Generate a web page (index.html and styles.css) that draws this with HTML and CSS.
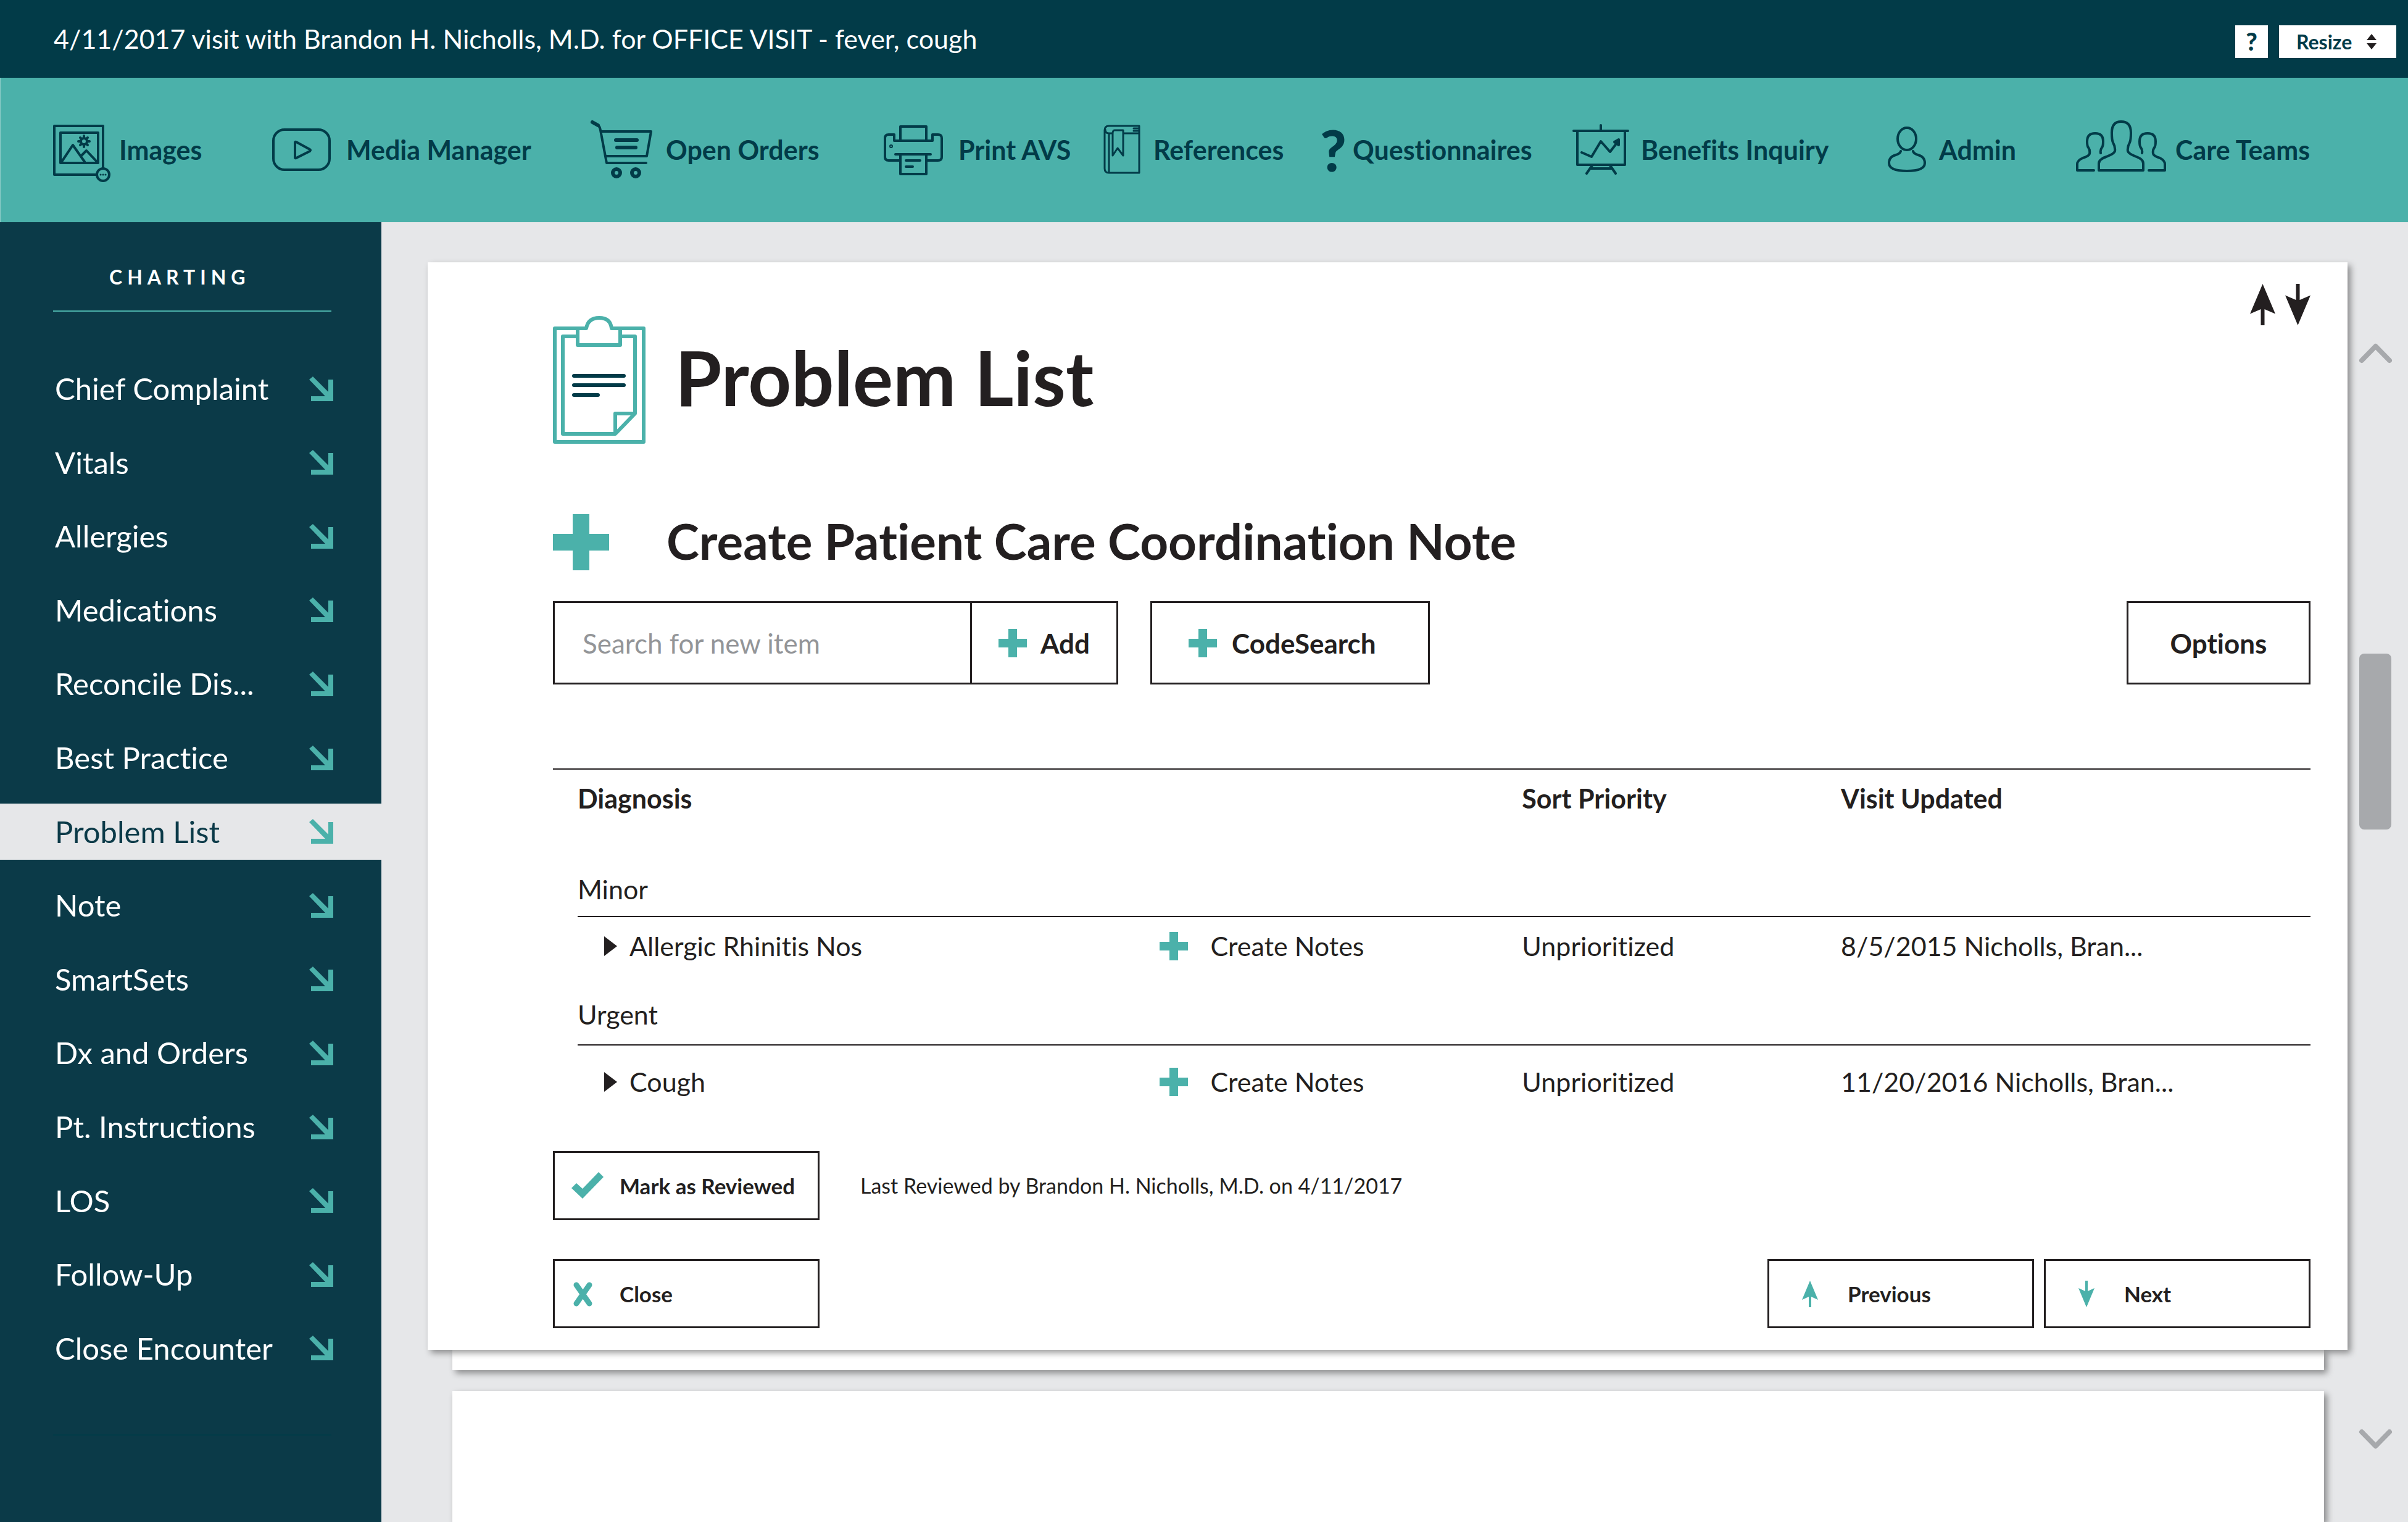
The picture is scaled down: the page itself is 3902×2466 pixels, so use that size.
FILE: index.html
```html
<!DOCTYPE html>
<html lang="en">
<head>
<meta charset="utf-8">
<meta name="viewport" content="width=device-width, initial-scale=1">
<title>Problem List</title>
<link rel="stylesheet" href="styles.css">
</head>
<body class="page">

<svg class="sprite" aria-hidden="true">
  <symbol id="go" viewBox="0 0 39 40"><path d="M0 5 6 0 31 25V5H39V40H3V32H26Z"/></symbol>
  <symbol id="plus" viewBox="0 0 46 46"><path d="M16 0H30V16H46V30H30V46H16V30H0V16H16Z"/></symbol>
  <symbol id="up" viewBox="0 0 41 67"><path d="M20.500 0 41 48.500 23.500 41V67H17.500V41L0 48.500Z"/></symbol>
  <symbol id="down" viewBox="0 0 41 67"><path d="M20.500 67 41 18.500 23.500 26V0H17.500V26L0 18.500Z"/></symbol>
  <symbol id="caret" viewBox="0 0 21 32"><path d="M0 0 21 16 0 32Z"/></symbol>
</svg>

<header class="banner">
  <p class="banner-title">4/11/2017 visit with Brandon H. Nicholls, M.D. for OFFICE VISIT - fever, cough</p>
  <div class="banner-tools">
    <button class="help" type="button">?</button>
    <div class="resize">
      <select class="resize-select" aria-label="Resize"><option>Resize</option></select>
      <svg class="resize-icon" viewBox="0 0 16 25" aria-hidden="true"><path d="M8 0 16 10H0ZM0 15H16L8 25Z"/></svg>
    </div>
  </div>
</header>

<nav class="toolbar" aria-label="Activities">
  <a class="tool" href="#">
    <svg class="tool-icon w90" viewBox="0 0 90 100" aria-hidden="true">
      <path d="M70 90H2V11H81V79"/><rect x="12" y="22" width="61" height="49"/>
      <path d="M14 69 32 42 51 69M45 60 54 51 71 69"/>
      <circle cx="50" cy="36" r="5"/><path d="M50 27v4M50 41v4M41 36h4M55 36h4M44 30l2 2M54 40l2 2M44 42l2-2M54 32l2-2"/>
      <circle cx="81" cy="90" r="10"/><path class="dots" d="M77 90h.1M81 90h.1M85 90h.1"/>
    </svg>Images</a>
  <a class="tool" href="#">
    <svg class="tool-icon w103" viewBox="0 0 103 100" aria-hidden="true">
      <rect x="2" y="17" width="91" height="65" rx="18"/><path d="M37 38v24q0 2 2 1l22-11q2-2 0-3L39 37q-2-1-2 1z"/>
    </svg>Media Manager</a>
  <a class="tool" href="#">
    <svg class="tool-icon w105" viewBox="0 0 105 100" aria-hidden="true">
      <path d="M4 6 12 10Q15 12 16 18L26 71H90M17 20H98L91 60H24"/>
      <path class="bold" d="M41 34H75M43 46H73"/><path class="bold" d="M3 5 12 10"/>
      <circle class="bold" cx="42" cy="87" r="6"/><circle class="bold" cx="73" cy="87" r="6"/>
    </svg>Open Orders</a>
  <a class="tool" href="#">
    <svg class="tool-icon w104" viewBox="0 0 104 100" aria-hidden="true">
      <path d="M27 35V12H69V35M17 25V35H79V25M17 25H8Q2 25 2 31V61Q2 67 8 67H27M79 25H88Q94 25 94 31V61Q94 67 88 67H69M19 57H76M27 57V89H69V57M36 67H59M36 77H47"/>
      <circle cx="12" cy="44" r="1"/>
    </svg>Print AVS</a>
  <a class="tool" href="#">
    <svg class="tool-icon thin w64" viewBox="0 0 64 100" aria-hidden="true">
      <path d="M58 11H9Q2 11 2 18V80Q2 87 9 87H58V11M3 17Q3 23 9 23H14M32 23H58M9 23V86M49 15H58M49 19H58M15 24V59L23 47 32 59V18H18Q15 18 15 24"/>
    </svg>References</a>
  <a class="tool" href="#"><span class="tool-mark" aria-hidden="true">?</span>Questionnaires</a>
  <a class="tool" href="#">
    <svg class="tool-icon w92" viewBox="0 0 92 100" aria-hidden="true">
      <path d="M0 19H88M44 10V19M6 19V74H83V19M30 75 21 88M59 75 68 88M27 80H62M13 54 29 61 44 36 59 53 72 36"/>
      <path class="solid" d="M66 37 73 33 73 42Z"/>
    </svg>Benefits Inquiry</a>
  <a class="tool" href="#">
    <svg class="tool-icon w66" viewBox="0 0 66 100" aria-hidden="true">
      <ellipse cx="31" cy="32" rx="15" ry="18"/><path d="M21 52Q20 56 13 58 2 61 2 71 2 84 31 84 60 84 60 71 60 61 49 58 42 56 41 52"/>
    </svg>Admin</a>
  <a class="tool" href="#">
    <svg class="tool-icon w144" viewBox="0 0 144 100" aria-hidden="true">
      <path d="M63 52Q64 45 60 38 58 34 58 22 58 4 73 4 89 4 89 22 89 34 87 38 83 45 84 52 85 56 98 61 109 65 109 72V83H37V72Q37 65 49 61 62 56 63 52Z"/>
      <path d="M29 83H2V73Q2 67 11 63 21 60 22 56 23 50 20 46 18 44 18 36 18 23 31 23 44 23 44 36 44 44 42 46 39 50 40 55"/>
      <path d="M118 83H144V73Q144 67 136 63 126 60 125 56 124 50 127 46 129 44 129 36 129 23 116 23 103 23 103 36 103 44 105 46 108 50 107 55"/>
    </svg>Care Teams</a>
</nav>

<div class="workspace">
  <aside class="sidebar">
    <h2 class="sidebar-title">CHARTING</h2>
    <nav class="sections" aria-label="Charting">
      <a class="section" href="#">Chief Complaint<svg class="go"><use href="#go"/></svg></a>
      <a class="section" href="#">Vitals<svg class="go"><use href="#go"/></svg></a>
      <a class="section" href="#">Allergies<svg class="go"><use href="#go"/></svg></a>
      <a class="section" href="#">Medications<svg class="go"><use href="#go"/></svg></a>
      <a class="section" href="#">Reconcile Dis...<svg class="go"><use href="#go"/></svg></a>
      <a class="section" href="#">Best Practice<svg class="go"><use href="#go"/></svg></a>
      <a class="section current" href="#" aria-current="page">Problem List<svg class="go"><use href="#go"/></svg></a>
      <a class="section" href="#">Note<svg class="go"><use href="#go"/></svg></a>
      <a class="section" href="#">SmartSets<svg class="go"><use href="#go"/></svg></a>
      <a class="section" href="#">Dx and Orders<svg class="go"><use href="#go"/></svg></a>
      <a class="section" href="#">Pt. Instructions<svg class="go"><use href="#go"/></svg></a>
      <a class="section" href="#">LOS<svg class="go"><use href="#go"/></svg></a>
      <a class="section" href="#">Follow-Up<svg class="go"><use href="#go"/></svg></a>
      <a class="section" href="#">Close Encounter<svg class="go"><use href="#go"/></svg></a>
    </nav>
  </aside>

  <main class="content">
    <article class="card">
      <div class="card-head">
        <svg class="clipboard" viewBox="0 0 150 207" aria-hidden="true">
          <path d="M54 20H3V204H147V20H95Q93 3 75 3T54 20ZM40 20V47H109V20M40 33H16V191H101L133 158V33H109M101 191V158H133"/>
          <path class="lines" d="M34 97H115M34 112H115M34 128H73"/>
        </svg>
        <h1 class="title">Problem List</h1>
        <div class="reorder">
          <button class="move" type="button" aria-label="Move up"><svg class="move-icon"><use href="#up"/></svg></button>
          <button class="move" type="button" aria-label="Move down"><svg class="move-icon"><use href="#down"/></svg></button>
        </div>
      </div>

      <div class="note-head">
        <svg class="plus-large" viewBox="0 0 91 91" aria-hidden="true"><path d="M32 0H59V32H91V59H59V91H32V59H0V32H32Z"/></svg>
        <h2 class="subtitle">Create Patient Care Coordination Note</h2>
      </div>

      <div class="actions">
        <form class="search">
          <input class="search-field" type="text" placeholder="Search for new item" aria-label="Search for new item">
          <button class="search-add" type="button"><svg class="plus"><use href="#plus"/></svg>Add</button>
        </form>
        <button class="button code" type="button"><svg class="plus"><use href="#plus"/></svg>CodeSearch</button>
        <button class="button options" type="button">Options</button>
      </div>

      <div class="problems">
        <table class="table">
          <colgroup><col class="c1"><col class="c2"><col class="c3"><col class="c4"></colgroup>
          <thead>
            <tr><th scope="col" colspan="2">Diagnosis</th><th scope="col">Sort Priority</th><th scope="col">Visit Updated</th></tr>
          </thead>
          <tbody>
            <tr><th class="group" scope="rowgroup" colspan="4">Minor</th></tr>
            <tr class="entry">
              <td><span class="name"><svg class="caret"><use href="#caret"/></svg>Allergic Rhinitis Nos</span></td>
              <td><a class="create" href="#"><svg class="plus"><use href="#plus"/></svg>Create Notes</a></td>
              <td>Unprioritized</td><td>8/5/2015 Nicholls, Bran...</td>
            </tr>
          </tbody>
          <tbody>
            <tr><th class="group group-next" scope="rowgroup" colspan="4">Urgent</th></tr>
            <tr class="entry entry-last">
              <td><span class="name"><svg class="caret"><use href="#caret"/></svg>Cough</span></td>
              <td><a class="create" href="#"><svg class="plus"><use href="#plus"/></svg>Create Notes</a></td>
              <td>Unprioritized</td><td>11/20/2016 Nicholls, Bran...</td>
            </tr>
          </tbody>
        </table>
      </div>

      <div class="review">
        <button class="button small" type="button">
          <svg class="small-icon" viewBox="0 0 52 44" aria-hidden="true"><path d="M0 26 8 18 18 27 44 0 52 8 18 43Z"/></svg>Mark as Reviewed</button>
        <p class="reviewed">Last Reviewed by Brandon H. Nicholls, M.D. on 4/11/2017</p>
      </div>

      <div class="footer">
        <button class="button small" type="button">
          <svg class="small-icon" viewBox="0 0 52 44" aria-hidden="true"><path class="cross" d="M8 8 29 38M29 8 8 38"/></svg>Close</button>
        <div class="pager">
          <button class="button small step" type="button"><svg class="step-icon" viewBox="0 0 26 43"><path d="M13 0 26 31 15 26V43H11V26L0 31Z"/></svg>Previous</button>
          <button class="button small step" type="button"><svg class="step-icon" viewBox="0 0 26 43"><path d="M13 43 26 12 15 17V0H11V17L0 12Z"/></svg>Next</button>
        </div>
      </div>
    </article>
    <div class="sheet sheet-edge"></div>
    <div class="sheet sheet-next"></div>
  </main>

  <div class="scroller" aria-hidden="true">
    <svg class="chevron" viewBox="0 0 53 31"><path d="M4 27 26.500 4 49 27"/></svg>
    <div class="track"><div class="thumb"></div></div>
    <svg class="chevron" viewBox="0 0 53 31"><path d="M4 4 26.500 27 49 4"/></svg>
  </div>
</div>
</body>
</html>
```

FILE: styles.css
```css
:root {
  --navy: #023b48;
  --slate: #0b3a48;
  --teal: #4bb1aa;
  --ink: #231f20;
  --grey: #e6e7e9;
}

*, *::before, *::after { box-sizing: border-box; }

.page {
  margin: 0;
  min-height: 100vh;
  display: flex;
  flex-direction: column;
  background: var(--grey);
  color: var(--ink);
  font-family: Lato, "Open Sans", sans-serif;
  font-size: 44px;
  line-height: 52px;
  font-variant-ligatures: no-common-ligatures;
}

.sprite { display: none; }
svg { display: block; flex: none; overflow: visible; }
h1, h2, p { margin: 0; }
a { color: inherit; text-decoration: none; }
button, input, select { font-family: inherit; font-variant-ligatures: inherit; color: inherit; margin: 0; border-radius: 0; }
button { cursor: pointer; }

/* Banner */
.banner {
  display: flex;
  align-items: center;
  justify-content: space-between;
  min-height: 126px;
  padding: 0 19px 0 87px;
  background: var(--navy);
  color: #fff;
}
.banner-title { font-size: 43px; }
.banner-tools { display: flex; gap: 18px; padding-top: 9px; color: var(--navy); }
.help {
  width: 53px;
  height: 53px;
  padding: 0;
  border: 0;
  background: #fff;
  font-size: 40px;
  font-weight: 900;
  line-height: 53px;
}
.resize { position: relative; }
.resize-select {
  display: block;
  appearance: none;
  width: 190px;
  height: 53px;
  padding: 0 28px;
  border: 0;
  background: #fff;
  font-size: 32px;
  font-weight: 700;
}
.resize-icon {
  position: absolute;
  top: 14px;
  right: 32px;
  width: 16px;
  height: 25px;
  fill: var(--ink);
  pointer-events: none;
}

/* Toolbar */
.toolbar {
  display: grid;
  grid-template-columns: 355fr 516fr 475fr 356fr 351fr 411fr 509fr 305fr 538fr;
  align-items: center;
  min-height: 234px;
  padding-left: 85px;
  border-left: 1px solid #8fcdc9;
  background: var(--teal);
  color: var(--navy);
  font-size: 43px;
  font-weight: 700;
}
.tool { display: flex; align-items: center; gap: 17px; white-space: nowrap; }
.tool-icon {
  height: 100px;
  fill: none;
  stroke: var(--navy);
  stroke-width: 4px;
  stroke-linecap: round;
  stroke-linejoin: round;
}
.thin { stroke-width: 3px; }
.bold { stroke-width: 6px; }
.dots { stroke-width: 3px; }
.solid { fill: var(--navy); }
.w64 { width: 64px; }
.w66 { width: 66px; }
.w90 { width: 90px; }
.w92 { width: 92px; }
.w103 { width: 103px; }
.w104 { width: 104px; }
.w105 { width: 105px; }
.w144 { width: 144px; }
.tool-mark { width: 36px; font-size: 92px; font-weight: 900; line-height: 100px; }

/* Workspace */
.workspace { flex: 1; display: grid; grid-template-columns: 618px 1fr 98px; }

.sidebar {
  display: flex;
  flex-direction: column;
  padding: 69px 0 140px;
  background: var(--slate);
  color: #fff;
}
.sidebar-title {
  margin: 0 81px 79px 86px;
  padding: 0 0 34px 91px;
  border-bottom: 2px solid var(--teal);
  font-size: 32px;
  font-weight: 700;
  line-height: 40px;
  letter-spacing: 8px;
}
.sections { flex: 1; display: flex; flex-direction: column; justify-content: space-between; }
.sidebar::after { content: ""; height: 2px; margin: 94px 81px 0 86px; background: var(--navy); }
.section {
  display: flex;
  align-items: center;
  justify-content: space-between;
  padding: 0 78px 0 89px;
  font-size: 49px;
  font-weight: 400;
  line-height: 91px;
}
.current { background: var(--grey); color: var(--slate); }
.go { width: 39px; height: 40px; fill: var(--teal); }

/* Content */
.content { display: flex; flex-direction: column; padding: 65px 0 0 75px; }
.card, .sheet { background: #fff; box-shadow: 5px 5px 10px rgba(0, 0, 0, .4); }
.card { position: relative; padding: 35px 60px 35px 203px; }
.sheet { margin: 0 38px 0 40px; }
.sheet-edge { height: 33px; }
.sheet-next { flex: 1; margin-top: 34px; }

.card-head { display: flex; align-items: center; gap: 48px; }
.clipboard {
  width: 150px;
  height: 207px;
  margin-top: 52px;
  fill: none;
  stroke: var(--teal);
  stroke-width: 6px;
  stroke-linejoin: round;
}
.lines { stroke: var(--navy); stroke-linecap: round; }
.title { padding-top: 42px; font-size: 122px; font-weight: 700; line-height: 144px; }
.reorder { display: flex; gap: 16px; align-self: flex-start; margin-left: auto; }
.move { padding: 0; border: 0; background: none; }
.move-icon { width: 41px; height: 67px; fill: var(--ink); }

.note-head { display: flex; gap: 93px; margin-top: 114px; }
.plus-large { width: 91px; height: 91px; fill: var(--teal); }
.subtitle { font-size: 80px; font-weight: 700; line-height: 86px; }

.actions { display: flex; margin-top: 50px; }
.search { display: flex; height: 135px; border: 3px solid var(--ink); }
.search-field {
  width: 673px;
  padding: 0 0 0 45px;
  border: 0;
  outline: 0;
  background: none;
  font-size: 44px;
}
.search-field::placeholder { color: #939598; opacity: 1; }
.search-add {
  display: flex;
  align-items: center;
  gap: 22px;
  width: 237px;
  padding: 0 0 0 43px;
  border: 0;
  border-left: 3px solid var(--ink);
  background: none;
  font-size: 44px;
  font-weight: 700;
}
.button {
  display: flex;
  align-items: center;
  height: 135px;
  padding: 0;
  border: 3px solid var(--ink);
  background: none;
  font-size: 44px;
  font-weight: 700;
}
.plus { width: 46px; height: 46px; fill: var(--teal); }
.code { width: 453px; gap: 24px; margin-left: 52px; padding-left: 59px; }
.options { width: 298px; justify-content: center; margin-left: auto; }

/* Problem table */
.problems { margin-top: 136px; padding-left: 40px; border-top: 2px solid var(--ink); }
.table { width: 100%; table-layout: fixed; border-spacing: 0; text-align: left; font-size: 43px; font-weight: 400; }
.c1 { width: 33.6%; }
.c2 { width: 20.9%; }
.c3 { width: 18.4%; }
.c4 { width: 27.1%; }
.table th, .table td { height: 94px; padding: 0; }
.table th { font-weight: 700; }
.table .group {
  height: 145px;
  padding-bottom: 17px;
  border-bottom: 2px solid var(--ink);
  font-weight: 400;
  vertical-align: bottom;
}
.table .group-next { height: 114px; padding-bottom: 22px; }
.table .entry-last td { height: 118px; }
.name { display: flex; align-items: center; gap: 20px; padding-left: 43px; }
.caret { width: 21px; height: 32px; fill: var(--ink); }
.create { display: flex; align-items: center; gap: 36px; }

/* Card footer */
.review { display: flex; align-items: center; gap: 66px; margin-top: 53px; }
.reviewed { font-size: 34px; font-weight: 400; }
.footer { display: flex; justify-content: space-between; margin-top: 63px; }
.pager { display: flex; gap: 16px; }
.small { width: 432px; height: 112px; gap: 26px; padding-left: 27px; font-size: 35px; }
.small-icon { width: 52px; height: 44px; fill: var(--teal); }
.cross { stroke: var(--teal); stroke-width: 9px; stroke-linecap: round; }
.step { gap: 48px; padding-left: 53px; }
.step-icon { width: 26px; height: 43px; fill: var(--teal); }

/* Scroll rail */
.scroller { display: flex; flex-direction: column; padding: 197px 26px 119px 19px; }
.chevron { width: 53px; height: 31px; fill: none; stroke: #a7a9ac; stroke-width: 8px; stroke-linecap: round; stroke-linejoin: round; }
.track { flex: 1; display: grid; grid-template-rows: 471fr 285fr 972fr; }
.thumb { grid-row: 2; width: 52px; border-radius: 8px; background: #a7a9ac; }
```
